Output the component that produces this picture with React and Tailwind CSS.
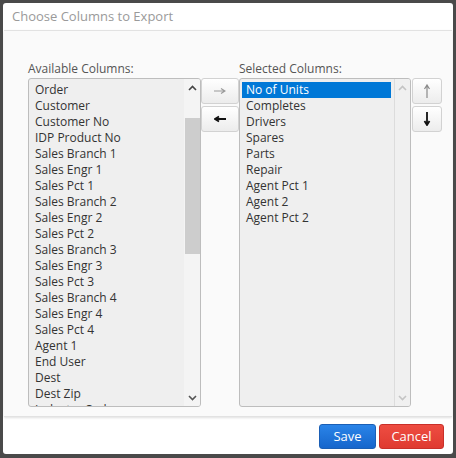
import React from 'react';

const available = [
  'Order', 'Customer', 'Customer No', 'IDP Product No',
  'Sales Branch 1', 'Sales Engr 1', 'Sales Pct 1',
  'Sales Branch 2', 'Sales Engr 2', 'Sales Pct 2',
  'Sales Branch 3', 'Sales Engr 3', 'Sales Pct 3',
  'Sales Branch 4', 'Sales Engr 4', 'Sales Pct 4',
  'Agent 1', 'End User', 'Dest', 'Dest Zip', 'Industry Code',
];

const selected = [
  'No of Units', 'Completes', 'Drivers', 'Spares', 'Parts',
  'Repair', 'Agent Pct 1', 'Agent 2', 'Agent Pct 2',
];

function Chevron({ up, color }) {
  return (
    <svg width="9" height="6" viewBox="0 0 9 6">
      <path
        d={up ? 'M1 5 L4.5 1.5 L8 5' : 'M1 1 L4.5 4.5 L8 1'}
        fill="none"
        stroke={color}
        strokeWidth="1.6"
      />
    </svg>
  );
}

function Arrow({ dir, color, bold }) {
  const w = bold ? 1.8 : 1.2;
  // horizontal arrows
  if (dir === 'right' || dir === 'left') {
    const d = dir === 'right'
      ? 'M0 4 H10 M7 1.5 L11 4 L7 6.5'
      : 'M12 4 H2 M5 1.5 L1 4 L5 6.5';
    return (
      <svg width="12" height="8" viewBox="0 0 12 8">
        <path d={d} fill="none" stroke={color} strokeWidth={w} />
      </svg>
    );
  }
  const d = dir === 'up'
    ? 'M4 14 V2 M1.5 5 L4 1 L6.5 5'
    : 'M4 0 V12 M1.5 9 L4 13 L6.5 9';
  return (
    <svg width="8" height="14" viewBox="0 0 8 14">
      <path d={d} fill="none" stroke={color} strokeWidth={w} />
    </svg>
  );
}

function SideButton({ children, wide }) {
  return (
    <button
      className={`${wide ? 'w-[38px]' : 'w-[30px]'} h-[26px] flex items-center justify-center rounded-[3px] border border-[#d2d2d2] bg-gradient-to-b from-[#ffffff] to-[#ececec]`}
    >
      {children}
    </button>
  );
}

export default function App() {
  return (
    <div className="w-[456px] h-[458px] bg-[#4a4a4a] p-[3px] pr-[3px] pb-[4px]" style={{ fontFamily: '"Open Sans", "Noto Sans", sans-serif' }}>
      <div className="w-[450px] h-[451px] bg-white rounded-[3px] flex flex-col">
        {/* Header */}
        <div className="h-[27px] flex items-center px-[9px] text-[13px] text-[#9a9a9a]">
          Choose Columns to Export
        </div>

        {/* Body */}
        <div className="h-[387px] mx-[1px] bg-[#fafafa] border-t border-b border-[#e2e2e2] shadow-[0_1px_2px_rgba(0,0,0,0.12)] pl-[24px] pt-[30px] flex">
          {/* Available */}
          <div className="flex flex-col">
            <div className="h-[17px] leading-[16px] text-[12px] text-[#555]">Available Columns:</div>
            <div className="w-[173px] h-[329px] border border-[#bdbdbd] rounded-[3px] bg-[#efefef] flex overflow-hidden">
              <div className="flex-1 pt-[3px] pl-[6px] overflow-hidden">
                {available.map((c) => (
                  <div key={c} className="h-[16px] leading-[16px] text-[12px] text-[#333] whitespace-nowrap">{c}</div>
                ))}
              </div>
              <div className="w-[16px] bg-[#f4f4f4] flex flex-col items-center">
                <div className="h-[17px] flex items-center justify-center"><Chevron up color="#444" /></div>
                <div className="h-[22px]" />
                <div className="w-[15px] h-[136px] bg-[#cdcdcd]" />
                <div className="flex-1" />
                <div className="h-[17px] flex items-center justify-center"><Chevron color="#555" /></div>
              </div>
            </div>
          </div>

          {/* Move buttons */}
          <div className="flex flex-col gap-[2px] pt-[17px]">
            <SideButton wide><Arrow dir="right" color="#9a9a9a" /></SideButton>
            <SideButton wide><Arrow dir="left" color="#111" bold /></SideButton>
          </div>

          {/* Selected */}
          <div className="flex flex-col">
            <div className="h-[17px] leading-[16px] text-[12px] text-[#555]">Selected Columns:</div>
            <div className="w-[172px] h-[329px] border border-[#bdbdbd] rounded-[3px] bg-[#efefef] flex overflow-hidden">
              <div className="flex-1 pt-[3px] pl-[2px] pr-[3px] overflow-hidden">
                {selected.map((c, i) => (
                  <div
                    key={c}
                    className={`h-[16px] leading-[16px] text-[12px] pl-[4px] whitespace-nowrap ${i === 0 ? 'bg-[#0078d7] text-white' : 'text-[#333]'}`}
                  >
                    {c}
                  </div>
                ))}
              </div>
              <div className="w-[16px] border-l border-[#dcdcdc] bg-[#f0f0f0] flex flex-col items-center justify-between">
                <div className="h-[17px] flex items-center justify-center"><Chevron up color="#c4c4c4" /></div>
                <div className="h-[17px] flex items-center justify-center"><Chevron color="#c4c4c4" /></div>
              </div>
            </div>
          </div>

          {/* Order buttons */}
          <div className="flex flex-col gap-[2px] pt-[17px] ml-[1px]">
            <SideButton><Arrow dir="up" color="#8a8a8a" /></SideButton>
            <SideButton><Arrow dir="down" color="#111" bold /></SideButton>
          </div>
        </div>

        {/* Footer */}
        <div className="flex justify-end gap-[3px] pt-[7px] pr-[9px]">
          <button className="w-[57px] h-[25px] rounded-[3px] border border-[#1b5fb5] bg-gradient-to-b from-[#2a84e8] to-[#1666cc] text-white text-[13px]">
            Save
          </button>
          <button className="w-[65px] h-[25px] rounded-[3px] border border-[#c9302a] bg-gradient-to-b from-[#ee4d42] to-[#df3a30] text-white text-[13px]">
            Cancel
          </button>
        </div>
      </div>
    </div>
  );
}
